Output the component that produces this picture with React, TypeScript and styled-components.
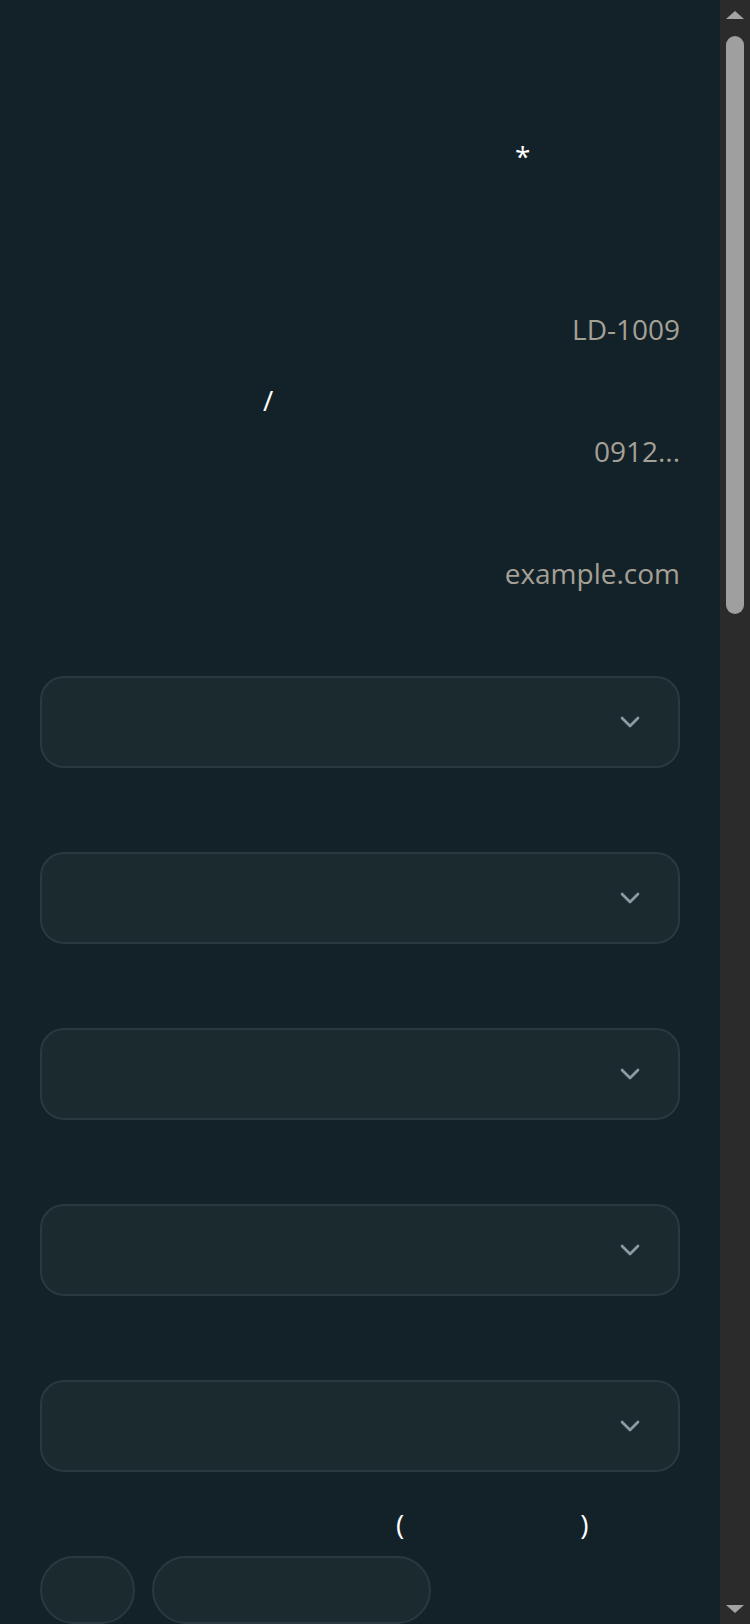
import React from "react";
import styled, { createGlobalStyle } from "styled-components";
import { ChevronDown } from "lucide-react";

const GlobalStyle = createGlobalStyle`
  :root { color-scheme: dark; }
  * { box-sizing: border-box; }
  html, body {
    margin: 0;
    padding: 0;
    background: #132228;
  }
  body {
    font-family: "Open Sans", "Noto Sans", sans-serif;
    color: #ffffff;
    overflow: hidden;
  }
`;

const Page = styled.main`
  min-height: 100vh;
  padding: 136px 70px 0 40px;
  background: #132228;
`;

const Form = styled.form`
  display: flex;
  flex-direction: column;
  gap: 32px;
`;

const Field = styled.div`
  display: flex;
  flex-direction: column;
  gap: 12px;
`;

const Label = styled.label<{ $indent?: number }>`
  display: flex;
  align-items: center;
  height: 40px;
  padding-left: ${(p) => p.$indent ?? 0}px;
  font-size: 28px;
  line-height: 40px;
  color: #ffffff;
  white-space: pre;
`;

const Spacer = styled.span<{ $w: number }>`
  display: inline-block;
  width: ${(p) => p.$w}px;
`;

const TextInput = styled.input`
  display: block;
  width: 100%;
  height: 38px;
  padding: 0;
  margin: 0;
  border: none;
  outline: none;
  background: transparent;
  font-family: inherit;
  font-size: 28px;
  line-height: 38px;
  color: #ffffff;
  text-align: right;
  direction: ltr;

  &::placeholder {
    color: #a5a096;
    opacity: 1;
  }
`;

const SelectBox = styled.div`
  display: flex;
  align-items: center;
  justify-content: flex-end;
  height: 92px;
  padding: 0 32px;
  background: #1b2a2f;
  border: 2px solid #283a3f;
  border-radius: 24px;
  color: #8a9ca1;
`;

const ButtonRow = styled.div`
  display: flex;
  gap: 17px;
`;

const Pill = styled.button<{ $w: number }>`
  width: ${(p) => p.$w}px;
  height: 68px;
  padding: 0;
  background: #1b2a2f;
  border: 2px solid #283a3f;
  border-radius: 999px;
  font-family: inherit;
  font-size: 28px;
  color: #ffffff;
`;

/* browser scrollbar as seen in the capture */
const ScrollRail = styled.div`
  position: fixed;
  top: 0;
  right: 0;
  bottom: 0;
  width: 30px;
  display: flex;
  flex-direction: column;
  align-items: center;
  background: #2b2b2b;
`;

const Arrow = styled.div<{ $down?: boolean }>`
  flex: 0 0 30px;
  display: flex;
  align-items: center;
  justify-content: center;

  &::before {
    content: "";
    width: 0;
    height: 0;
    border-left: 9px solid transparent;
    border-right: 9px solid transparent;
    ${(p) =>
      p.$down
        ? "border-top: 8px solid #a3a3a3;"
        : "border-bottom: 8px solid #a3a3a3;"}
  }
`;

const Track = styled.div`
  flex: 1;
  width: 100%;
  padding: 6px 6px 0;
`;

const Thumb = styled.div`
  height: 578px;
  border-radius: 9px;
  background: #9f9f9f;
`;

function Select() {
  return (
    <SelectBox role="combobox" aria-expanded="false">
      <ChevronDown size={32} strokeWidth={2} />
    </SelectBox>
  );
}

export default function App() {
  return (
    <>
      <GlobalStyle />
      <Page>
        <Form>
          <Field>
            <Label $indent={475}>*</Label>
            <TextInput type="text" />
          </Field>
          <Field>
            <Label />
            <TextInput type="text" placeholder="LD-1009" />
          </Field>
          <Field>
            <Label $indent={223}>/</Label>
            <TextInput type="tel" placeholder="0912..." />
          </Field>
          <Field>
            <Label />
            <TextInput type="email" placeholder="example.com" />
          </Field>
          {[0, 1, 2, 3, 4].map((i) => (
            <Field key={i}>
              <Label />
              <Select />
            </Field>
          ))}
          <Field>
            <Label $indent={356}>
              (<Spacer $w={176} />)
            </Label>
            <ButtonRow>
              <Pill type="button" $w={95} />
              <Pill type="button" $w={279} />
            </ButtonRow>
          </Field>
        </Form>
      </Page>
      <ScrollRail aria-hidden="true">
        <Arrow />
        <Track>
          <Thumb />
        </Track>
        <Arrow $down />
      </ScrollRail>
    </>
  );
}
